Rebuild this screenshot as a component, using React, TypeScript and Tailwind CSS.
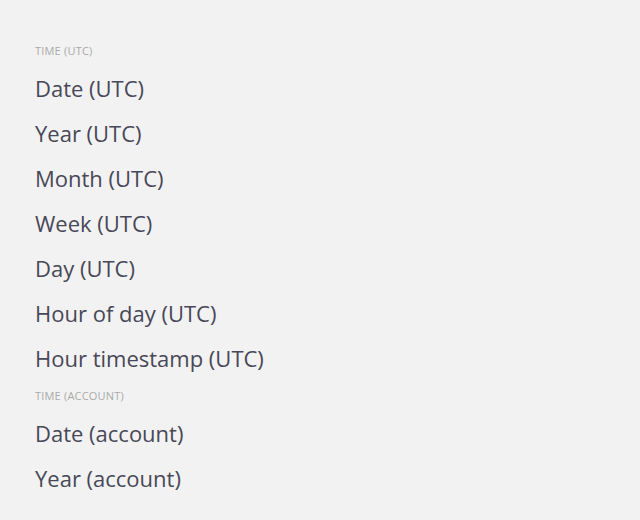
import React from "react";

const groups = [
  { title: "TIME (UTC)", items: ["Date (UTC)", "Year (UTC)", "Month (UTC)", "Week (UTC)", "Day (UTC)", "Hour of day (UTC)", "Hour timestamp (UTC)"] },
  { title: "TIME (ACCOUNT)", items: ["Date (account)", "Year (account)"] },
];

export default function App() {
  return (
    <div className="w-[640px] h-[520px] overflow-hidden bg-[#f2f2f2] pl-[35px] pt-[36px]" style={{ fontFamily: '"Open Sans", sans-serif' }}>
      {groups.map((g) => (
        <div key={g.title}>
          <div className="h-[30px] flex items-center text-[11px] tracking-[0.2px] text-[#aaaaaa]">{g.title}</div>
          {g.items.map((it) => (
            <div key={it} className="h-[45px] flex items-center text-[22px] text-[#484858]">{it}</div>
          ))}
        </div>
      ))}
    </div>
  );
}
